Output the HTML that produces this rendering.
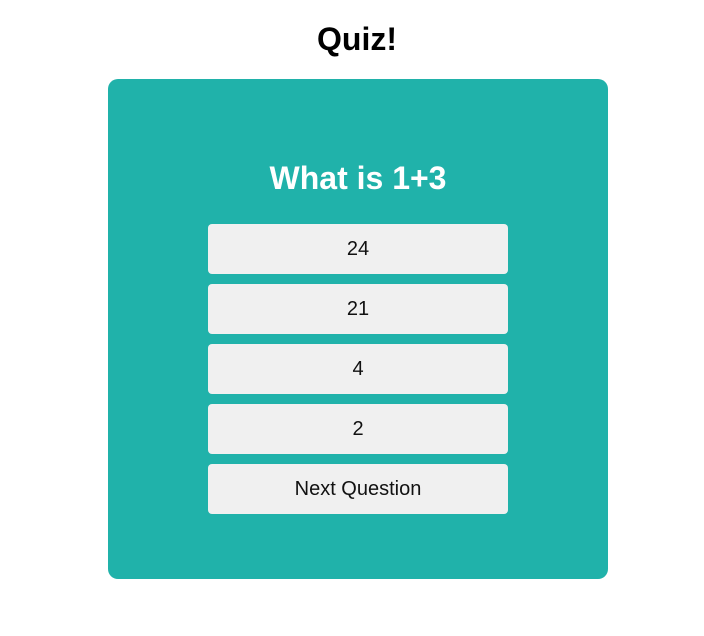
<!DOCTYPE html>
<html><head><style>
body{margin:0;width:704px;height:636px;background:#fff;font-family:"Liberation Sans",sans-serif;position:relative}
h1{position:absolute;top:20px;left:0;width:714px;text-align:center;margin:0;font-size:32px;line-height:38px;font-weight:bold}
.box{position:absolute;left:108px;top:79px;width:500px;height:500px;background:#20b2aa;border-radius:10px}
h2{position:absolute;top:158px;left:108px;width:500px;text-align:center;margin:0;color:#fff;font-size:32px;line-height:40px}
.b{position:absolute;left:208px;width:300px;height:50px;background:#f0f0f0;border-radius:4px;text-align:center;line-height:50px;font-size:20px;color:#111}
</style></head><body>
<h1>Quiz!</h1>
<div class="box"></div>
<h2>What is 1+3</h2>
<div class="b" style="top:224px">24</div>
<div class="b" style="top:284px">21</div>
<div class="b" style="top:344px">4</div>
<div class="b" style="top:404px">2</div>
<div class="b" style="top:464px">Next Question</div>
</body></html>
